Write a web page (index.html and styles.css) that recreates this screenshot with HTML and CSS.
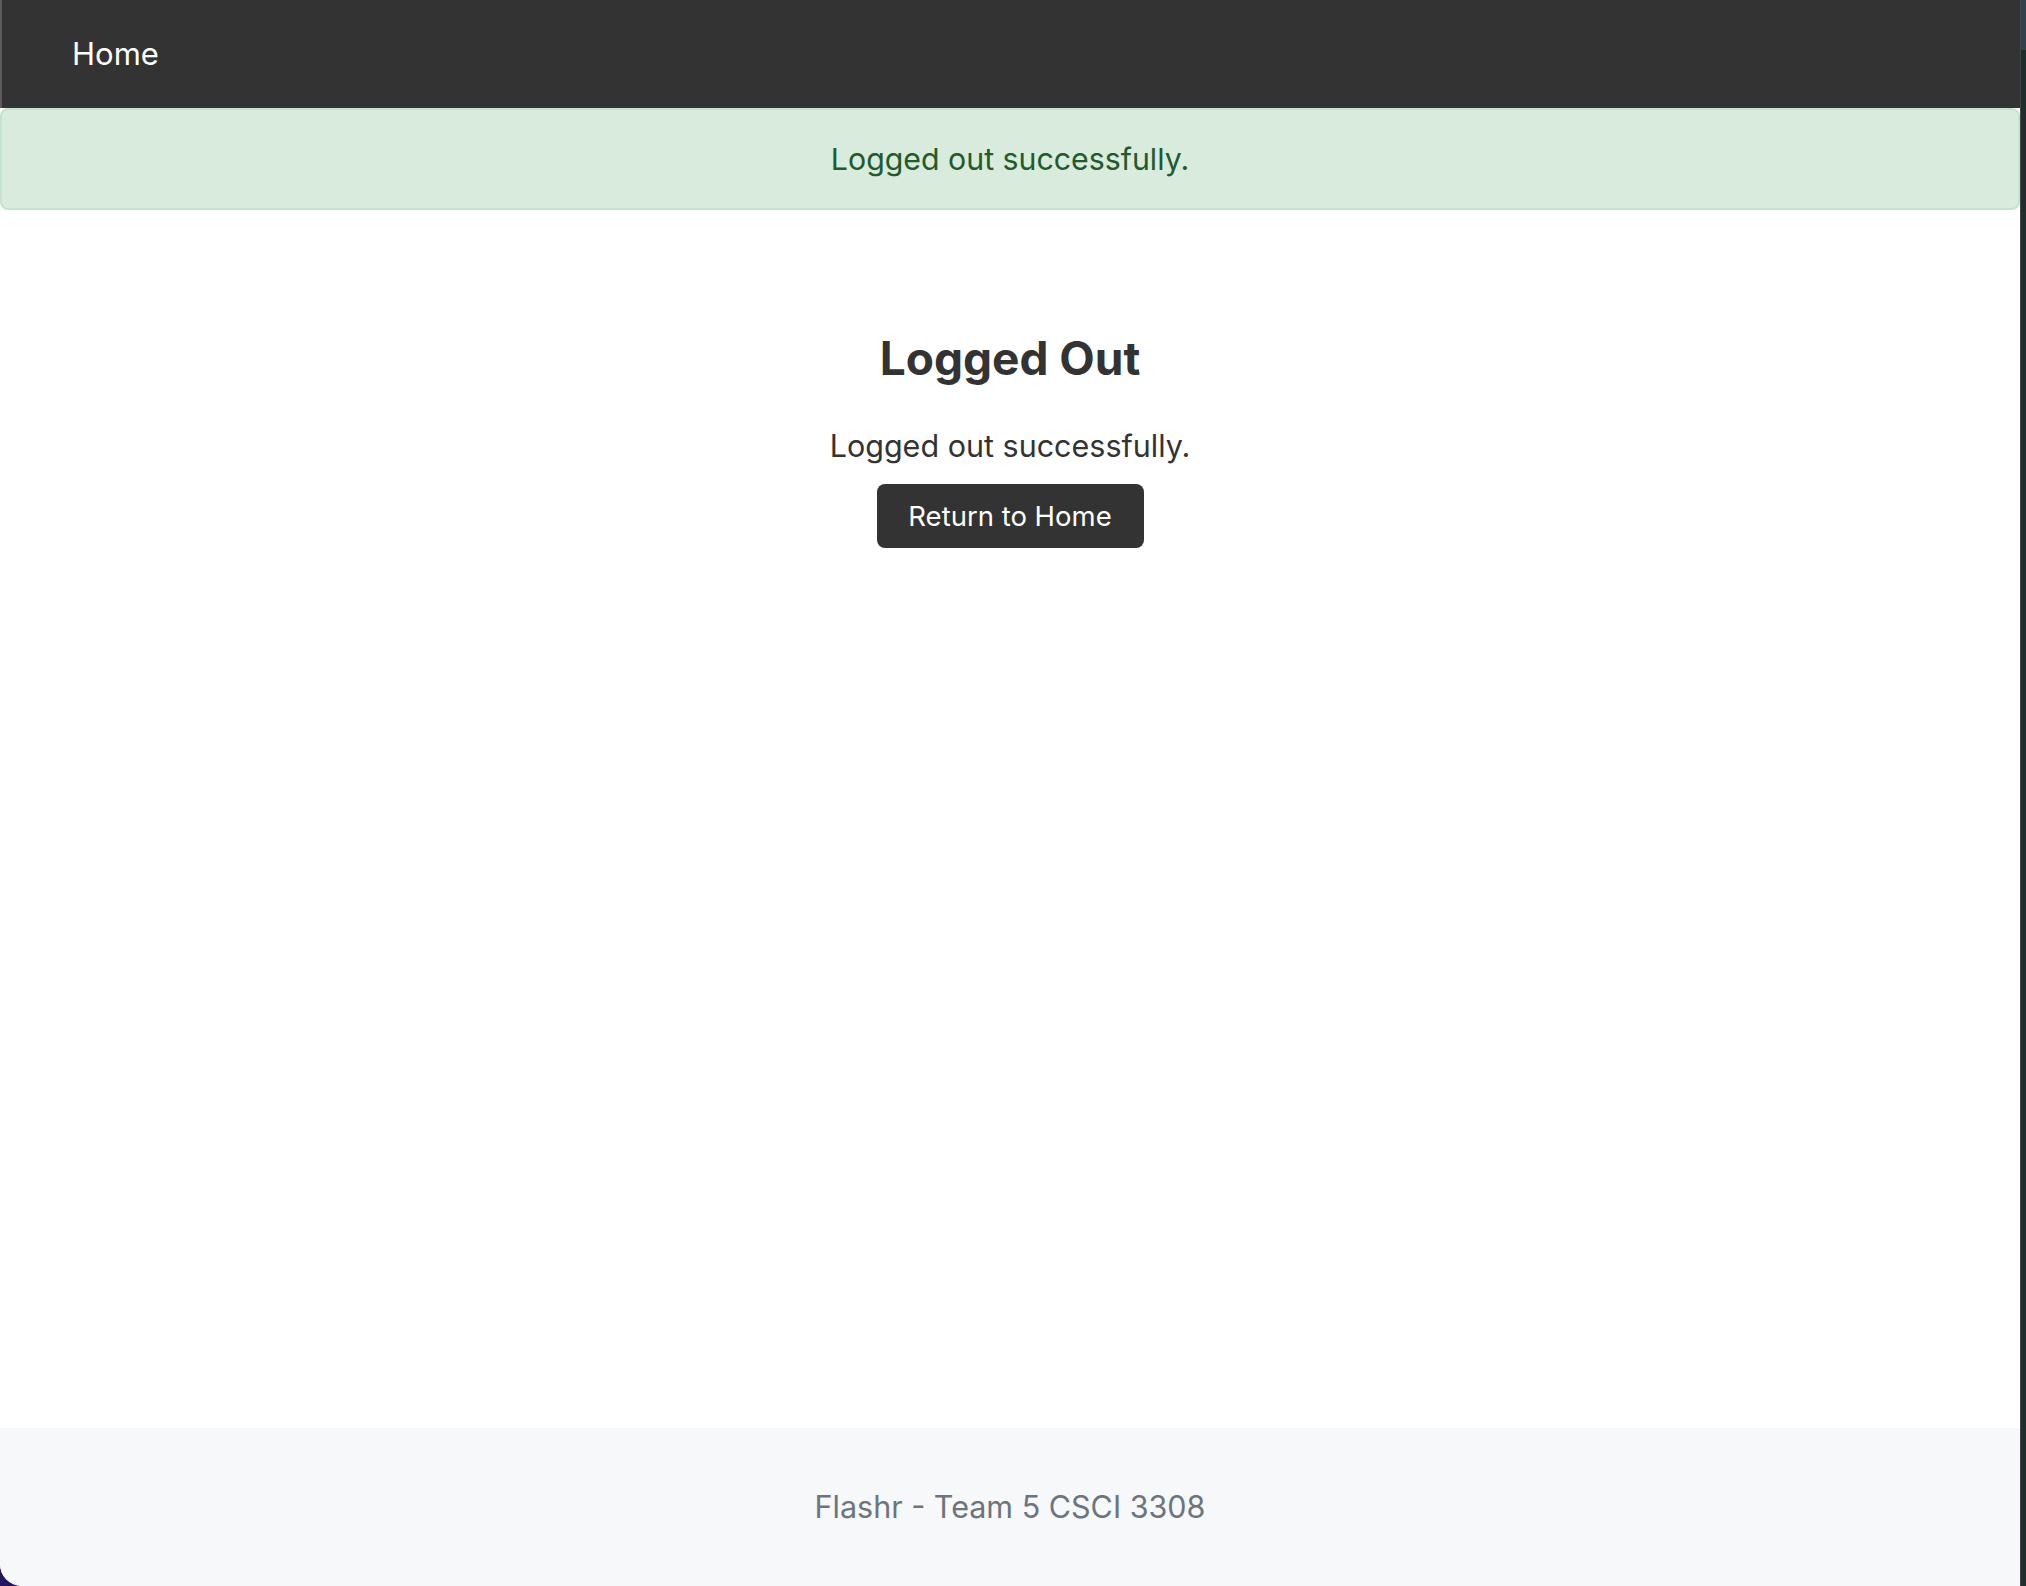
FILE: index.html
```html
<!DOCTYPE html>
<html lang="en">
<head>
<meta charset="utf-8">
<title>Logged Out</title>
<link rel="stylesheet" href="styles.css">
</head>
<body>
<div class="desktop">
  <div class="window">
    <nav class="navbar">
      <a class="nav-link" href="#">Home</a>
    </nav>
    <div class="alert">Logged out successfully.</div>
    <main class="content">
      <h1 class="title">Logged Out</h1>
      <p class="message">Logged out successfully.</p>
      <a class="btn" href="#">Return to Home</a>
    </main>
    <footer class="footer">Flashr - Team 5 CSCI 3308</footer>
  </div>
  <div class="side-strip">
    <div class="strip-top"></div>
  </div>
</div>
</body>
</html>
```

FILE: styles.css
```css
html, body {
  margin: 0;
  padding: 0;
  height: 100%;
}
body {
  background: #24165e;
  font-family: Inter, "Noto Sans", "Liberation Sans", sans-serif;
}
.desktop {
  display: flex;
  height: 100%;
}
.window {
  flex: 1;
  display: flex;
  flex-direction: column;
  background: #ffffff;
  border-bottom-left-radius: 22px;
  overflow: hidden;
}
.navbar {
  height: 108px;
  flex: none;
  background: #333333;
  border-left: 2px solid #5c5c5c;
  display: flex;
  align-items: center;
  padding-left: 70px;
  padding-bottom: 2px;
  box-sizing: border-box;
}
.nav-link {
  color: #ffffff;
  text-decoration: none;
  font-size: 31px;
}
.alert {
  flex: none;
  height: 102px;
  box-sizing: border-box;
  background: #d9ebdc;
  border: 2px solid #c6e3cb;
  border-radius: 8px;
  color: #225a2c;
  font-size: 30.3px;
  display: flex;
  align-items: center;
  justify-content: center;
}
.content {
  flex: 1;
  display: flex;
  flex-direction: column;
  align-items: center;
  color: #333333;
}
.title {
  margin: 121px 0 0;
  font-size: 46px;
  font-weight: 700;
  line-height: 1.2;
}
.message {
  margin: 36px 0 0;
  font-size: 30.5px;
  line-height: 48px;
}
.btn {
  margin-top: 14px;
  width: 267px;
  height: 64px;
  box-sizing: border-box;
  background: #333333;
  color: #ffffff;
  border-radius: 8px;
  text-decoration: none;
  font-size: 27.5px;
  display: flex;
  align-items: center;
  justify-content: center;
}
.footer {
  flex: none;
  height: 158px;
  background: #f7f8fa;
  color: #6c757d;
  font-size: 30.5px;
  display: flex;
  align-items: center;
  justify-content: center;
  padding-bottom: 2px;
  box-sizing: border-box;
}
.side-strip {
  width: 6px;
  flex: none;
  background: #222c2c;
  border-left: 1px solid #3a4a4c;
  box-sizing: border-box;
}
.strip-top {
  height: 50px;
  background: #304447;
}
```
